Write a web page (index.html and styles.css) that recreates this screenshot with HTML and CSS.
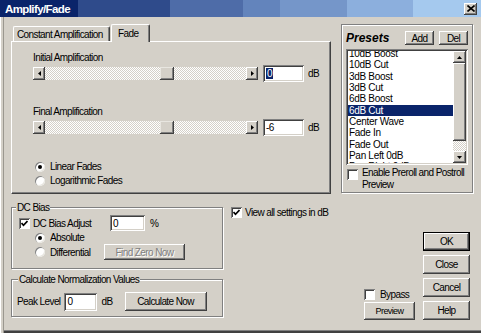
FILE: index.html
```html
<!DOCTYPE html>
<html>
<head>
<meta charset="utf-8">
<title>Amplify/Fade</title>
<link rel="stylesheet" href="styles.css">
</head>
<body>
<div class="dialog">
  <div class="titlebar">
    <span class="title">Amplify/Fade</span>
    <span class="close-btn"><svg width="8" height="7" viewBox="0 0 8 7"><path d="M0.5 0.5 L7.5 6.5 M7.5 0.5 L0.5 6.5" stroke="#000" stroke-width="1.6"/></svg></span>
  </div>
  <div class="content">
    <div class="left-col">
      <div class="tabs">
        <div class="tab">Constant Amplification</div>
        <div class="tab tab-active">Fade</div>
      </div>
      <div class="tab-panel">
        <div class="field-label">Initial Amplification</div>
        <div class="slider-row">
          <div class="slider">
            <span class="arrow-btn"><svg width="3" height="5" viewBox="0 0 3 5"><path d="M3 0 L0 2.5 L3 5Z"/></svg></span>
            <span class="track"><span class="thumb" style="margin-left:115px"></span></span>
            <span class="arrow-btn"><svg width="3" height="5" viewBox="0 0 3 5"><path d="M0 0 L3 2.5 L0 5Z"/></svg></span>
          </div>
          <span class="edit edit-amp"><span class="sel">0</span></span>
          <span class="unit">dB</span>
        </div>
        <div class="field-label second">Final Amplification</div>
        <div class="slider-row">
          <div class="slider">
            <span class="arrow-btn"><svg width="3" height="5" viewBox="0 0 3 5"><path d="M3 0 L0 2.5 L3 5Z"/></svg></span>
            <span class="track"><span class="thumb" style="margin-left:115px"></span></span>
            <span class="arrow-btn"><svg width="3" height="5" viewBox="0 0 3 5"><path d="M0 0 L3 2.5 L0 5Z"/></svg></span>
          </div>
          <span class="edit edit-amp">-6</span>
          <span class="unit">dB</span>
        </div>
        <div class="fade-types">
          <div class="option"><span class="radio checked"></span>Linear Fades</div>
          <div class="option"><span class="radio"></span>Logarithmic Fades</div>
        </div>
      </div>
      <div class="lower">
        <div class="groups">
          <fieldset class="group dc-group">
            <legend>DC Bias</legend>
            <div class="dc-row">
              <span class="check-box"><svg width="7" height="7" viewBox="0 0 7 7"><path d="M0.5 3 L2.5 5.3 L6.5 1" fill="none" stroke="#000" stroke-width="1.7"/></svg></span>
              <span class="dc-label">DC Bias Adjust</span>
              <span class="edit edit-dc">0</span>
              <span class="unit">%</span>
            </div>
            <div class="dc-radio"><span class="radio checked"></span><span class="radio-text">Absolute</span></div>
            <div class="dc-radio"><span class="radio"></span><span class="radio-text">Differential</span><span class="btn btn-disabled find-zero">Find Zero Now</span></div>
          </fieldset>
          <fieldset class="group calc-group">
            <legend>Calculate Normalization Values</legend>
            <div class="calc-row">
              <span>Peak Level</span>
              <span class="edit edit-peak">0</span>
              <span class="unit">dB</span>
              <span class="btn calc-btn">Calculate Now</span>
            </div>
          </fieldset>
        </div>
        <div class="view-all">
          <span class="check-box"><svg width="7" height="7" viewBox="0 0 7 7"><path d="M0.5 3 L2.5 5.3 L6.5 1" fill="none" stroke="#000" stroke-width="1.7"/></svg></span>
          <span>View all settings in dB</span>
        </div>
      </div>
    </div>
    <div class="right-col">
      <div class="presets">
        <div class="presets-head">
          <span class="presets-title">Presets</span>
          <span class="btn small-btn">Add</span>
          <span class="btn small-btn">Del</span>
        </div>
        <div class="listbox">
          <div class="list-view">
            <div class="list-items" style="margin-top:-3px">
              <div class="item">10dB Boost</div>
              <div class="item">10dB Cut</div>
              <div class="item">3dB Boost</div>
              <div class="item">3dB Cut</div>
              <div class="item">6dB Boost</div>
              <div class="item selected">6dB Cut</div>
              <div class="item">Center Wave</div>
              <div class="item">Fade In</div>
              <div class="item">Fade Out</div>
              <div class="item">Pan Left 0dB</div>
              <div class="item">Pan Right 0dB</div>
            </div>
          </div>
          <div class="scrollbar">
            <span class="arrow-btn sb-btn"><svg width="5" height="3" viewBox="0 0 5 3"><path d="M0 3 L2.5 0 L5 3Z"/></svg></span>
            <span class="sb-thumb"></span>
            <span class="sb-track"></span>
            <span class="arrow-btn sb-btn"><svg width="5" height="3" viewBox="0 0 5 3"><path d="M0 0 L2.5 3 L5 0Z"/></svg></span>
          </div>
        </div>
        <div class="preroll">
          <span class="check-box"></span>
          <span class="preroll-text">Enable Preroll and Postroll Preview</span>
        </div>
      </div>
      <div class="bottom-right">
        <div class="bypass-col">
          <div class="bypass"><span class="check-box"></span><span>Bypass</span></div>
          <span class="btn preview-btn">Preview</span>
        </div>
        <div class="button-col">
          <span class="btn default-btn">OK</span>
          <span class="btn">Close</span>
          <span class="btn">Cancel</span>
          <span class="btn">Help</span>
        </div>
      </div>
    </div>
  </div>
</div>
</body>
</html>
```

FILE: styles.css
```css
body {
	margin: 0;
	background: #d4d0c8;
	font-family: "Liberation Sans", Arial, sans-serif;
	font-size: 10px;
	letter-spacing: -0.6px;
	color: #000;
}
.dialog {
	width: 481px;
	height: 333px;
	overflow: hidden;
	display: flex;
	flex-direction: column;
	box-shadow: inset 0 -2px #404040, inset 0 -3px #808080;
}
.titlebar {
	height: 17px;
	flex: none;
	display: flex;
	align-items: center;
	justify-content: space-between;
	padding: 0 4px 0 5px;
	background: linear-gradient(to right, #0a246a 0 78px, #2f4b8b 78px 170px, #4e6ca8 170px 243px, #6384bc 243px 280px, #7596c9 280px 347px, #8cafdd 347px 413px, #a5c9ee 413px);
}
.title {
	color: #fff;
	font-weight: bold;
	font-size: 11.5px;
}
.close-btn {
	width: 13px;
	height: 12px;
	display: flex;
	align-items: center;
	justify-content: center;
	background: #d4d0c8;
	box-shadow: inset -1px -1px #404040, inset 1px 1px #fff, inset -2px -2px #808080;
}
.content {
	flex: 1;
	display: flex;
	padding-left: 11px;
	box-shadow: inset 1px 0 #fff, inset 3px 0 #d4d0c8, inset 4px 0 #9a978f;
}

/* left side */
.left-col {
	width: 320px;
	padding-top: 7px;
}
.tabs {
	height: 17px;
	display: flex;
	align-items: flex-end;
	padding-left: 2px;
}
.tab {
	height: 15px;
	box-sizing: border-box;
	width: 97px;
	padding: 2px 0 0 3px;
	border-top: 1px solid #fff;
	border-left: 1px solid #fff;
	border-right: 1px solid #404040;
	border-radius: 2px 2px 0 0;
	box-shadow: inset -1px 0 #808080;
	white-space: nowrap;
}
.tab-active {
	width: 39px;
	height: 18px;
	margin-left: 1px;
	margin-bottom: -1px;
	padding: 3px 0 0 6px;
	position: relative;
	z-index: 1;
	background: #d4d0c8;
}
.tab-panel {
	height: 153px;
	box-sizing: border-box;
	border-top: 1px solid #fff;
	border-left: 1px solid #fff;
	border-right: 1px solid #404040;
	border-bottom: 1px solid #404040;
	box-shadow: inset -1px -1px #808080;
	padding: 10px 0 0 21px;
}
.field-label {
	line-height: 12px;
}
.field-label.second {
	margin-top: 24px;
}
.slider-row {
	height: 17px;
	display: flex;
	align-items: center;
	margin-top: 1px;
}
.slider {
	width: 225px;
	height: 13px;
	display: flex;
}
.arrow-btn {
	width: 12px;
	height: 13px;
	flex: none;
	box-sizing: border-box;
	display: flex;
	align-items: center;
	justify-content: center;
	background: #d4d0c8;
	box-shadow: inset -1px -1px #404040, inset 1px 1px #fff, inset -2px -2px #808080;
}
.track {
	flex: 1;
	display: flex;
	background: repeating-conic-gradient(#fff 0 25%, #d4d0c8 0 50%) 0 0 / 2px 2px;
}
.thumb {
	width: 14px;
	height: 13px;
	background: #d4d0c8;
	box-shadow: inset -1px -1px #404040, inset 1px 1px #e8e6e0, inset -2px -2px #808080;
}
.edit {
	box-sizing: border-box;
	background: #fff;
	display: flex;
	align-items: center;
	padding-left: 3px;
	box-shadow: inset 1px 1px #808080, inset -1px -1px #fff, inset 2px 2px #404040, inset -2px -2px #d4d0c8;
}
.edit-amp {
	width: 41px;
	height: 17px;
	margin-left: 5px;
}
.sel {
	background: #0a246a;
	color: #fff;
	padding: 0 1px;
	line-height: 11px;
}
.unit {
	margin-left: 4px;
}
.fade-types {
	margin-top: 24px;
	padding-left: 2px;
}
.option {
	display: flex;
	align-items: center;
	line-height: 14px;
}
.radio {
	width: 10px;
	height: 10px;
	flex: none;
	border-radius: 50%;
	background: #fff;
	margin-right: 5px;
	display: flex;
	align-items: center;
	justify-content: center;
	box-shadow: inset 1px 1px #808080, inset -1px -1px #e8e6e0, 0 0 0 1px #d4d0c8;
}
.radio.checked::after {
	content: "";
	width: 4px;
	height: 4px;
	border-radius: 50%;
	background: #000;
}
.check-box {
	width: 11px;
	height: 11px;
	flex: none;
	box-sizing: border-box;
	background: #fff;
	display: flex;
	align-items: center;
	justify-content: center;
	box-shadow: inset 1px 1px #808080, inset -1px -1px #fff, inset 2px 2px #404040;
}

/* group boxes */
.lower {
	display: flex;
	margin-top: 7px;
}
.groups {
	width: 212px;
}
.group {
	margin: 0;
	padding: 0;
	min-width: 0;
	border: 1px solid #808080;
	box-shadow: inset 1px 1px #fff, 1px 1px #fff;
}
.group legend {
	padding: 0 1px;
	margin-left: 4px;
	line-height: 13px;
	background: #d4d0c8;
}
.dc-row {
	height: 16px;
	margin-top: 1px;
	display: flex;
	align-items: center;
	padding-left: 7px;
}
.dc-label {
	margin-left: 3px;
	width: 77px;
}
.edit-dc {
	width: 35px;
	height: 16px;
}
.unit {
	margin-left: 4px;
}
.dc-row .unit {
	margin-left: 5px;
}
.dc-radio {
	display: flex;
	align-items: center;
	height: 13px;
	padding-left: 23px;
}
.dc-radio + .dc-radio {
	height: 16px;
	padding-bottom: 8px;
}
.radio-text {
	width: 54px;
	overflow: hidden;
	white-space: nowrap;
}
.btn {
	box-sizing: border-box;
	display: flex;
	align-items: center;
	justify-content: center;
	background: #d4d0c8;
	box-shadow: inset -1px -1px #404040, inset 1px 1px #fff, inset -2px -2px #808080;
	white-space: nowrap;
}
.btn-disabled {
	color: #808080;
	text-shadow: 1px 1px #fff;
}
.find-zero {
	width: 81px;
	height: 16px;
}
.calc-group {
	margin-top: 4px;
}
.calc-group legend {
	margin-left: 6px;
}
.calc-row {
	display: flex;
	align-items: center;
	height: 19px;
	margin-top: 6px;
	padding: 0 0 5px 5px;
}
.edit-peak {
	width: 33px;
	height: 18px;
	margin-left: 4px;
}
.calc-btn {
	width: 82px;
	height: 19px;
	margin-left: 12px;
}
.view-all {
	display: flex;
	align-items: center;
	margin: 6px 0 0 8px;
	height: 11px;
}
.view-all .check-box {
	margin-right: 3px;
}

/* right side */
.right-col {
	width: 132px;
	margin-left: 10px;
	padding-top: 7px;
}
.presets {
	height: 169px;
	box-sizing: border-box;
	border: 1px solid #808080;
	box-shadow: inset 1px 1px #fff, 1px 1px #fff;
	padding: 0 4px 0 4px;
}
.presets-head {
	display: flex;
	align-items: center;
	margin-top: 6px;
	height: 14px;
}
.presets-title {
	font-size: 12px;
	font-weight: bold;
	font-style: italic;
	letter-spacing: 0;
	margin-right: auto;
}
.small-btn {
	width: 29px;
	height: 14px;
	margin-left: 5px;
}
.listbox {
	margin-top: 4px;
	height: 116px;
	box-sizing: border-box;
	padding: 2px;
	display: flex;
	background: #fff;
	box-shadow: inset 1px 1px #808080, inset -1px -1px #fff, inset 2px 2px #404040, inset -2px -2px #d4d0c8;
}
.list-view {
	flex: 1;
	overflow: hidden;
}
.item {
	height: 11.33px;
	line-height: 11.33px;
	padding-left: 1px;
	letter-spacing: -0.3px;
	white-space: nowrap;
}
.item.selected {
	background: #0a246a;
	color: #fff;
}
.scrollbar {
	width: 13px;
	display: flex;
	flex-direction: column;
}
.sb-btn {
	width: 13px;
	height: 12px;
}
.sb-thumb {
	height: 78px;
	box-shadow: inset -1px -1px #404040, inset 1px 1px #fff, inset -2px -2px #808080;
	background: #d4d0c8;
}
.sb-track {
	flex: 1;
	background: repeating-conic-gradient(#fff 0 25%, #d4d0c8 0 50%) 0 0 / 2px 2px;
}
.preroll {
	display: flex;
	align-items: flex-start;
	margin-top: 2px;
	padding-left: 1px;
}
.preroll .check-box {
	margin-top: 2px;
	margin-right: 4px;
}
.preroll-text {
	line-height: 12px;
}
.bottom-right {
	display: flex;
	align-items: flex-end;
	margin-top: 39px;
}
.bypass-col {
	width: 51px;
	margin-left: 23px;
}
.bypass {
	display: flex;
	align-items: center;
	height: 12px;
}
.bypass .check-box {
	margin-right: 5px;
}
.preview-btn {
	height: 18px;
	margin-top: 2px;
	font-size: 9px;
}
.button-col {
	width: 47px;
	margin-left: 8px;
	display: flex;
	flex-direction: column;
	gap: 4px;
}
.button-col .btn {
	height: 19px;
}
.button-col .default-btn {
	border: 1px solid #000;
}
```
